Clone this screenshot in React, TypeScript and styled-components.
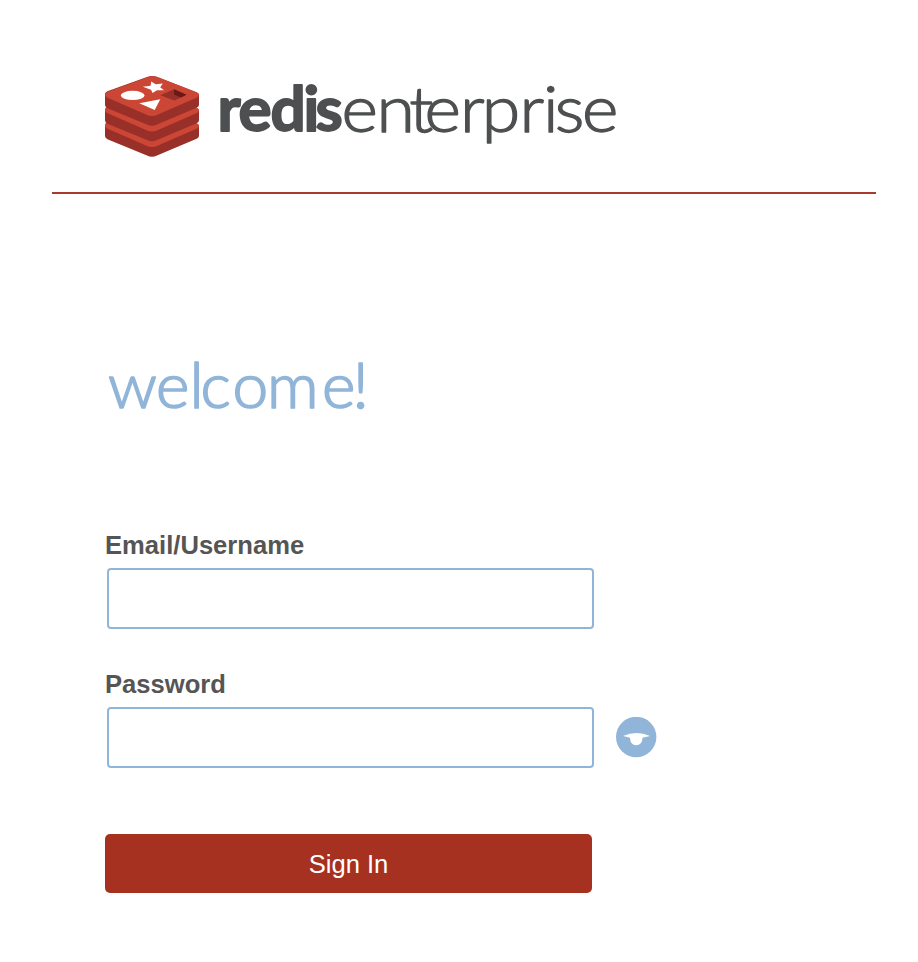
import React from "react";
import styled, { createGlobalStyle } from "styled-components";

const GlobalStyle = createGlobalStyle`
  * { box-sizing: border-box; }
  body { margin: 0; background: #fff; font-family: "Liberation Sans", Arial, sans-serif; }
`;

const Page = styled.main`
  width: 918px;
  height: 962px;
  padding: 0 42px 0 52px;
  overflow: hidden;
`;

const Header = styled.header`
  height: 194px;
  padding: 70px 0 0 53px;
  border-bottom: 2px solid #aa3a2c;
`;

const Brand = styled.div`
  display: flex;
  align-items: flex-start;
`;

const Cubes = styled.svg`
  display: block;
  width: 95px;
  height: 90px;
`;

const Lettering = styled.svg<{ $width: number }>`
  display: block;
  width: ${(p) => p.$width}px;
  height: 90px;
  overflow: visible;
  font-family: Lato, sans-serif;
  font-size: 64px;
  stroke-linejoin: round;
`;

const Strong = styled.text`
  font-size: 62px;
  font-weight: 700;
  fill: #4d4f50;
  stroke: #4d4f50;
  stroke-width: 1.8px;
`;

const Light = styled.text<{ $color: string; $stroke: number }>`
  font-weight: 300;
  fill: ${(p) => p.$color};
  stroke: ${(p) => p.$color};
  stroke-width: ${(p) => p.$stroke}px;
`;

const Content = styled.form`
  padding: 146px 0 0 53px;
`;

const Title = styled.h1`
  margin: 0;
  height: 189px;
`;

const Field = styled.div`
  height: 139px;
`;

const Label = styled.label`
  display: block;
  height: 39px;
  padding-top: 1px;
  color: #555;
  font-size: 25.6px;
  font-weight: 700;
  line-height: 30px;
`;

const InputRow = styled.div`
  display: flex;
  align-items: center;
  gap: 22px;
  padding-left: 2px;
`;

const Input = styled.input`
  width: 487px;
  height: 61px;
  padding: 0 16px;
  border: 2px solid #91b5d8;
  border-radius: 4px;
  background: #fff;
  font: 25px "Liberation Sans", Arial, sans-serif;
  outline: none;
`;

const Reveal = styled.button`
  width: 41px;
  height: 41px;
  padding: 0;
  border: 0;
  background: none;
  svg { display: block; }
`;

const Submit = styled.button`
  display: block;
  width: 487px;
  height: 59px;
  margin-top: 27px;
  padding: 1px 0 0;
  border: 0;
  border-radius: 5px;
  background: #a63121;
  color: #fff;
  font: 25.6px/58px "Liberation Sans", Arial, sans-serif;
`;

const slab =
  "M0 24 Q0 22 3 21 L42 7 Q47 5 52 7 L91 22 Q94 23 94 25 V35 Q94 37 91 38 L52 54.5 Q47 57 42 54.5 L3 38.5 Q0 37 0 35Z";
const face =
  "M2 22 L42 7.5 Q48 5 54 7.5 L92 22.5 Q96 25 92 27.5 L53 44.5 Q47 47.5 41 44.5 L2 27.5 Q-2 25 2 22Z";

function RedisCubes() {
  return (
    <Cubes viewBox="0 0 95 90" aria-hidden="true">
      {[31, 15.5, 0].map((y) => (
        <g key={y} transform={`translate(0 ${y})`}>
          <path d={slab} fill="#982f28" />
          <path d={face} fill="#cc4636" />
        </g>
      ))}
      <ellipse cx="27.7" cy="25.4" rx="11.8" ry="4.6" fill="#fff" />
      <path d="M34.3 33.3 55.3 29.3 49.7 40Z" fill="#fff" />
      <path d="M46.2 11.5 50.6 14.3 57.8 13.4 55.2 17.2 59 20.3 52 20.2 47.6 23 46 19.8 37.8 16.8 45.6 15.8Z" fill="#fff" />
      <path d="M55.3 25.3 69 19.3 81.5 24.8 69.5 30.5Z" fill="#982f28" />
      <path d="M69 19.3 81.5 24.8 76 27.6 69 24.4Z" fill="#691a16" />
    </Cubes>
  );
}

export default function App() {
  return (
    <>
      <GlobalStyle />
      <Page>
        <Header>
          <Brand aria-label="redis enterprise">
            <RedisCubes />
            <Lettering $width={430} viewBox="0 0 430 90">
              <Strong y="61.3" x="17.5 38.5 70.5 103.5 115.5">redis</Strong>
              <Light
                y="61.6"
                x="129.9 162 192 206 238.6 258.5 293.2 314.7 325.5 350.5"
                transform="scale(1.09 1)"
                $color="#4d4f50"
                $stroke={1.3}
              >
                enterprise
              </Light>
            </Lettering>
          </Brand>
        </Header>
        <Content onSubmit={(e) => e.preventDefault()}>
          <Title>
            <Lettering $width={280} viewBox="0 0 280 90">
              <Light
                y="68"
                x="3 51 84.5 95.5 127.5 162 217 247.5"
                $color="#91b5d8"
                $stroke={1.7}
              >
                welcome!
              </Light>
            </Lettering>
          </Title>
          <Field>
            <Label htmlFor="username">Email/Username</Label>
            <InputRow>
              <Input id="username" />
            </InputRow>
          </Field>
          <Field>
            <Label htmlFor="password">Password</Label>
            <InputRow>
              <Input id="password" type="password" />
              <Reveal type="button" aria-label="Show password">
                <svg width="41" height="41" viewBox="0 0 41 41">
                  <circle cx="20.2" cy="20" r="20.2" fill="#91b5d8" />
                  <path d="M7 19Q20.5 13 34 19L26.5 20.8Q26.3 28.3 20.2 28.3Q14.2 28.3 14 20.8Z" fill="#fff" />
                </svg>
              </Reveal>
            </InputRow>
          </Field>
          <Submit type="submit">Sign In</Submit>
        </Content>
      </Page>
    </>
  );
}
